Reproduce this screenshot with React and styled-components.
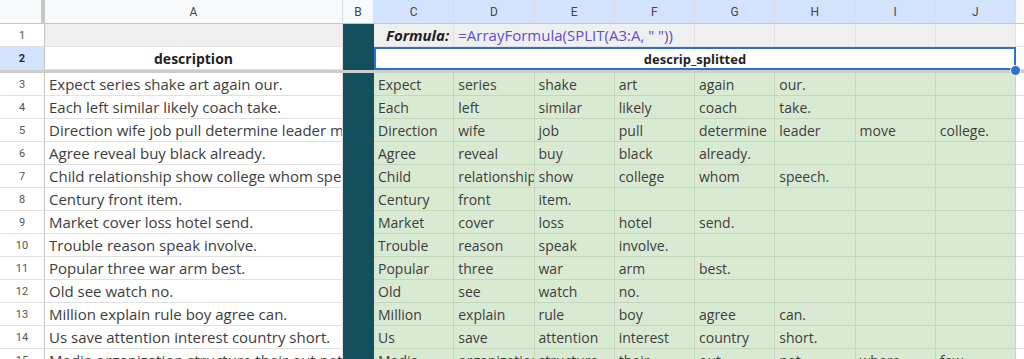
import React from 'react';
import styled, { createGlobalStyle } from 'styled-components';

const GlobalStyle = createGlobalStyle`
  html, body {
    margin: 0;
    padding: 0;
    background: #fff;
  }
  body {
    font-family: "Open Sans", "Noto Sans", sans-serif;
    overflow: hidden;
  }
`;

const TEAL = '#134f5c';
const GREEN = '#d9ead3';
const GRAY_ROW = '#efefef';
const SELECT = '#2f6fd0';
const HEADER_SEL = '#d3e3fd';

const Sheet = styled.div`
  display: grid;
  grid-template-columns: 45px 298px 31px repeat(8, 80.25px) 1fr;
  grid-template-rows: 24px 23px 23px 3px;
  grid-auto-rows: 23px;
  width: 1024px;
  height: 359px;
  overflow: hidden;
  background: #fff;
`;

const Corner = styled.div`
  background: #f8f9fa;
  border-right: 4px solid #c4c7c5;
  border-bottom: 1px solid #c4c7c5;
`;

const ColHeader = styled.div`
  display: flex;
  align-items: center;
  justify-content: center;
  background: ${p => (p.$selected ? HEADER_SEL : '#f8f9fa')};
  border-right: 1px solid #dadce0;
  border-bottom: 1px solid #c4c7c5;
  font-family: Roboto, "Liberation Sans", sans-serif;
  font-size: 12px;
  color: #444;
`;

const RowHeader = styled.div`
  display: flex;
  align-items: center;
  justify-content: center;
  background: ${p => (p.$selected ? HEADER_SEL : '#fff')};
  border-right: 1px solid #c4c7c5;
  border-bottom: 1px solid #e1e1e1;
  font-family: Roboto, "Liberation Sans", sans-serif;
  font-size: 11px;
  font-weight: ${p => (p.$selected ? 700 : 400)};
  color: ${p => (p.$selected ? '#1f2a44' : '#555')};
`;

const FrozenBar = styled.div`
  grid-column: 1 / -1;
  background: #cbcdcc;
`;

const Cell = styled.div`
  grid-column: ${p => (p.$span ? `span ${p.$span}` : 'auto')};
  display: flex;
  align-items: center;
  justify-content: ${p => p.$align || 'flex-start'};
  padding: 0 4px;
  overflow: hidden;
  white-space: nowrap;
  background: ${p => p.$bg || '#fff'};
  border-right: 1px solid ${p => p.$line || '#e1e1e1'};
  border-bottom: 1px solid ${p => p.$line || '#e1e1e1'};
  color: ${p => p.$color || '#3d3d3d'};
  font-size: ${p => p.$size || 14}px;
  font-weight: ${p => (p.$bold ? 700 : 400)};
  font-style: ${p => (p.$italic ? 'italic' : 'normal')};
`;

const TealCell = styled.div`
  background: ${TEAL};
  border-right: 1px solid ${TEAL};
`;

const MergedHeader = styled.div`
  grid-column: span 8;
  position: relative;
  z-index: 2;
  display: flex;
  align-items: center;
  justify-content: center;
  background: #fff;
  box-shadow: inset 0 0 0 2px ${SELECT};
  font-size: 13px;
  font-weight: 700;
  color: #1f1f1f;

  &::after {
    content: '';
    position: absolute;
    right: -5px;
    bottom: -6px;
    width: 11px;
    height: 11px;
    border-radius: 50%;
    background: ${SELECT};
    border: 1px solid #fff;
    box-sizing: border-box;
  }
`;

const descriptions = [
  'Expect series shake art again our.',
  'Each left similar likely coach take.',
  'Direction wife job pull determine leader move college.',
  'Agree reveal buy black already.',
  'Child relationship show college whom speech.',
  'Century front item.',
  'Market cover loss hotel send.',
  'Trouble reason speak involve.',
  'Popular three war arm best.',
  'Old see watch no.',
  'Million explain rule boy agree can.',
  'Us save attention interest country short.',
  'Media organization structure their out net where few.',
];

const letters = ['C', 'D', 'E', 'F', 'G', 'H', 'I', 'J'];

export default function App() {
  return (
    <>
      <GlobalStyle />
      <Sheet>
        <Corner />
        <ColHeader>A</ColHeader>
        <ColHeader>B</ColHeader>
        {letters.map(l => (
          <ColHeader key={l} $selected>{l}</ColHeader>
        ))}
        <ColHeader />

        <RowHeader>1</RowHeader>
        <Cell $bg={GRAY_ROW} />
        <TealCell />
        <Cell $bg={GRAY_ROW} $align="flex-end" $bold $italic $color="#1f1f1f" $size={15}>
          Formula:
        </Cell>
        <Cell $bg={GRAY_ROW} $span={3} $color="#5b50d0" $size={15}>
          =ArrayFormula(SPLIT(A3:A, " "))
        </Cell>
        <Cell $bg={GRAY_ROW} />
        <Cell $bg={GRAY_ROW} />
        <Cell $bg={GRAY_ROW} />
        <Cell $bg={GRAY_ROW} />
        <Cell />

        <RowHeader $selected>2</RowHeader>
        <Cell $align="center" $bold $color="#1f1f1f">description</Cell>
        <TealCell />
        <MergedHeader>descrip_splitted</MergedHeader>
        <Cell />

        <FrozenBar />

        {descriptions.map((text, i) => {
          const words = text.split(' ');
          return (
            <React.Fragment key={i}>
              <RowHeader>{i + 3}</RowHeader>
              <Cell $size={15}>{text}</Cell>
              <TealCell />
              {letters.map(l => (
                <Cell key={l} $bg={GREEN} $line="#c5d6bd" $size={14}>
                  {words[letters.indexOf(l)] || ''}
                </Cell>
              ))}
              <Cell />
            </React.Fragment>
          );
        })}
      </Sheet>
    </>
  );
}
